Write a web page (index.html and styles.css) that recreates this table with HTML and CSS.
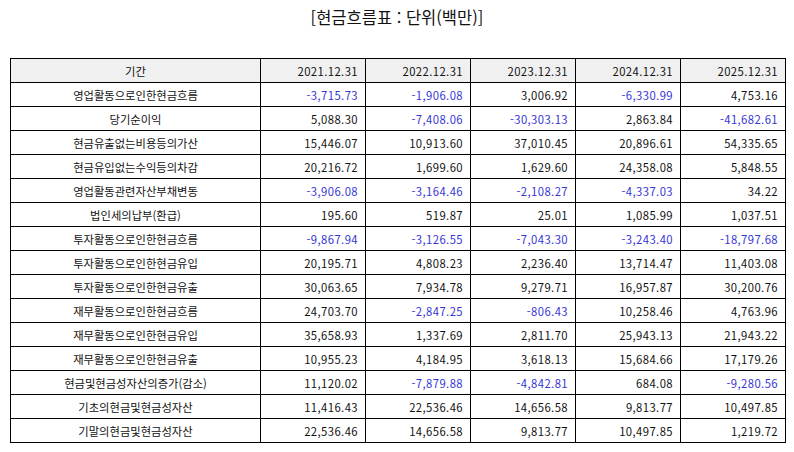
FILE: index.html
```html
<!DOCTYPE html>
<html lang="ko">
<head>
<meta charset="utf-8">
<link rel="stylesheet" href="styles.css">
</head>
<body>
<div class="page">
  <h1 class="title">[현금흐름표 : 단위(백만)]</h1>
  <table class="grid">
    <colgroup>
      <col class="c-label"><col class="c-num"><col class="c-num"><col class="c-num"><col class="c-num"><col class="c-num">
    </colgroup>
    <thead>
      <tr><th>기간</th><th>2021.12.31</th><th>2022.12.31</th><th>2023.12.31</th><th>2024.12.31</th><th>2025.12.31</th></tr>
    </thead>
    <tbody>
      <tr><td>영업활동으로인한현금흐름</td><td class="neg">-3,715.73</td><td class="neg">-1,906.08</td><td>3,006.92</td><td class="neg">-6,330.99</td><td>4,753.16</td></tr>
      <tr><td>당기순이익</td><td>5,088.30</td><td class="neg">-7,408.06</td><td class="neg">-30,303.13</td><td>2,863.84</td><td class="neg">-41,682.61</td></tr>
      <tr><td>현금유출없는비용등의가산</td><td>15,446.07</td><td>10,913.60</td><td>37,010.45</td><td>20,896.61</td><td>54,335.65</td></tr>
      <tr><td>현금유입없는수익등의차감</td><td>20,216.72</td><td>1,699.60</td><td>1,629.60</td><td>24,358.08</td><td>5,848.55</td></tr>
      <tr><td>영업활동관련자산부채변동</td><td class="neg">-3,906.08</td><td class="neg">-3,164.46</td><td class="neg">-2,108.27</td><td class="neg">-4,337.03</td><td>34.22</td></tr>
      <tr><td>법인세의납부(환급)</td><td>195.60</td><td>519.87</td><td>25.01</td><td>1,085.99</td><td>1,037.51</td></tr>
      <tr><td>투자활동으로인한현금흐름</td><td class="neg">-9,867.94</td><td class="neg">-3,126.55</td><td class="neg">-7,043.30</td><td class="neg">-3,243.40</td><td class="neg">-18,797.68</td></tr>
      <tr><td>투자활동으로인한현금유입</td><td>20,195.71</td><td>4,808.23</td><td>2,236.40</td><td>13,714.47</td><td>11,403.08</td></tr>
      <tr><td>투자활동으로인한현금유출</td><td>30,063.65</td><td>7,934.78</td><td>9,279.71</td><td>16,957.87</td><td>30,200.76</td></tr>
      <tr><td>재무활동으로인한현금흐름</td><td>24,703.70</td><td class="neg">-2,847.25</td><td class="neg">-806.43</td><td>10,258.46</td><td>4,763.96</td></tr>
      <tr><td>재무활동으로인한현금유입</td><td>35,658.93</td><td>1,337.69</td><td>2,811.70</td><td>25,943.13</td><td>21,943.22</td></tr>
      <tr><td>재무활동으로인한현금유출</td><td>10,955.23</td><td>4,184.95</td><td>3,618.13</td><td>15,684.66</td><td>17,179.26</td></tr>
      <tr><td>현금및현금성자산의증가(감소)</td><td>11,120.02</td><td class="neg">-7,879.88</td><td class="neg">-4,842.81</td><td>684.08</td><td class="neg">-9,280.56</td></tr>
      <tr><td>기초의현금및현금성자산</td><td>11,416.43</td><td>22,536.46</td><td>14,656.58</td><td>9,813.77</td><td>10,497.85</td></tr>
      <tr><td>기말의현금및현금성자산</td><td>22,536.46</td><td>14,656.58</td><td>9,813.77</td><td>10,497.85</td><td>1,219.72</td></tr>
    </tbody>
  </table>
</div>
</body>
</html>
```

FILE: styles.css
```css
html, body {
  margin: 0;
  padding: 0;
  background: #ffffff;
}
.page {
  width: 794px;
  height: 452px;
  padding: 0 10px;
  box-sizing: border-box;
  font-family: "Noto Sans CJK KR", "Noto Sans", sans-serif;
  color: #111;
}
.title {
  margin: 0;
  height: 58px;
  padding-top: 5px;
  box-sizing: border-box;
  text-align: center;
  font-size: 16.5px;
  font-weight: normal;
  line-height: 24px;
  color: #111;
}
.grid {
  width: 775px;
  border-collapse: collapse;
  table-layout: fixed;
  font-size: 11.3px;
}
.c-label { width: 250px; }
.c-num { width: 105px; }
.grid th,
.grid td {
  border: 1px solid #000;
  height: 23px;
  padding: 0 7px;
  line-height: 14px;
  font-weight: normal;
  white-space: nowrap;
  text-align: right;
  letter-spacing: 0.4px;
}
.grid th { background: #f0f0f0; }
.grid th:first-child,
.grid td:first-child {
  text-align: center;
  letter-spacing: 0;
}
.grid td.neg { color: #3535d6; }
```
